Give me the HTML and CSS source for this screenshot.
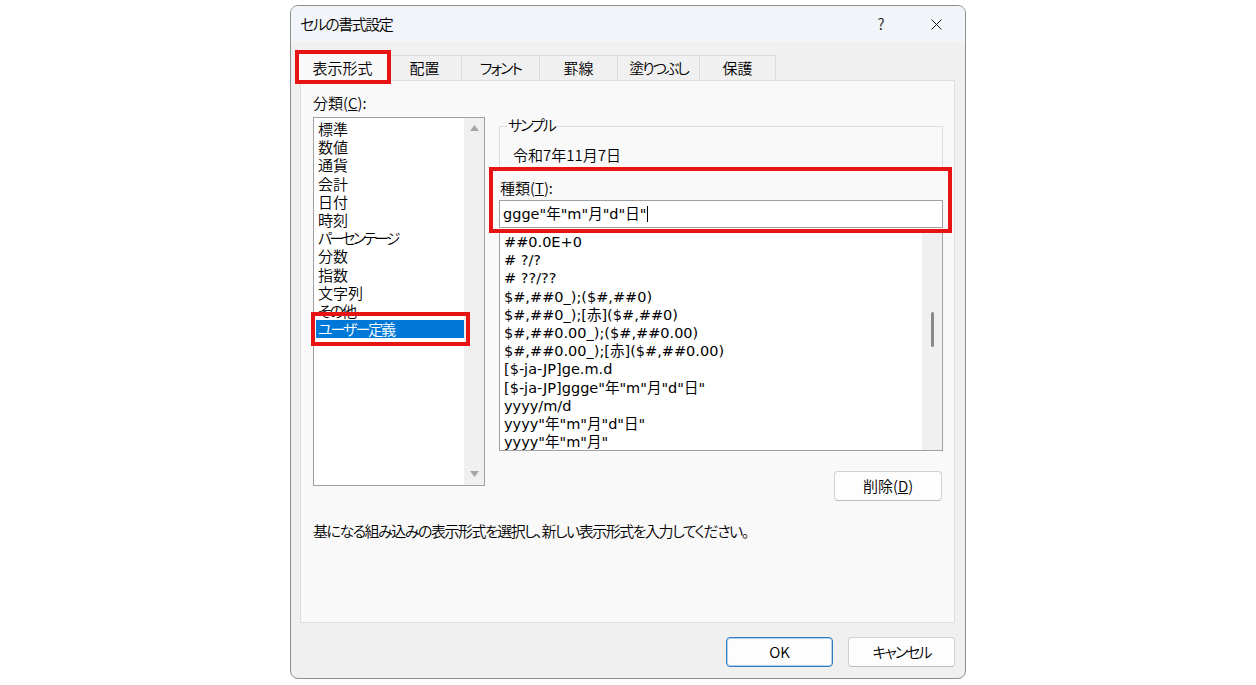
FILE: index.html
```html
<!DOCTYPE html>
<html lang="ja">
<head>
<meta charset="utf-8">
<title>セルの書式設定</title>
<link rel="stylesheet" href="styles.css">
</head>
<body>
<div class="dialog">
  <div class="titlebar">
    <span class="title t1">セルの書式設定</span>
    <div class="caption-buttons">
      <span class="cap-btn help">?</span>
      <span class="cap-btn close"><svg width="11" height="11" viewBox="0 0 11 11"><path d="M0.5 0.5L10.5 10.5M10.5 0.5L0.5 10.5" stroke="#1a1a1a" stroke-width="1" fill="none"/></svg></span>
    </div>
  </div>
  <div class="tabs">
    <div class="tab active">表示形式</div>
    <div class="tab">配置</div>
    <div class="tab t2">フォント</div>
    <div class="tab">罫線</div>
    <div class="tab t2">塗りつぶし</div>
    <div class="tab">保護</div>
  </div>
  <div class="panel">
    <div class="panel-grid">
      <div class="left-col">
        <div class="label">分類(<u>C</u>):</div>
        <div class="listbox cat-list">
          <ul class="items">
            <li>標準</li>
            <li>数値</li>
            <li>通貨</li>
            <li>会計</li>
            <li>日付</li>
            <li>時刻</li>
            <li class="t3">パーセンテージ</li>
            <li>分数</li>
            <li>指数</li>
            <li>文字列</li>
            <li class="t2">その他</li>
            <li class="selected t2">ユーザー定義</li>
          </ul>
          <div class="vscroll arrows">
            <svg width="9" height="6" viewBox="0 0 9 6"><path d="M4.5 0L9 6H0z" fill="#a6a6a6"/></svg>
            <svg width="9" height="6" viewBox="0 0 9 6"><path d="M0 0H9L4.5 6z" fill="#a6a6a6"/></svg>
          </div>
        </div>
      </div>
      <div class="right-col">
        <div class="group">
          <div class="group-label t2">サンプル</div>
          <div class="sample">令和7年11月7日</div>
        </div>
        <div class="label type-label">種類(<u>T</u>):</div>
        <div class="input">ggge"年"m"月"d"日"<span class="caret"></span></div>
        <div class="listbox fmt-list">
          <ul class="items">
            <li>##0.0E+0</li>
            <li># ?/?</li>
            <li># ??/??</li>
            <li>$#,##0_);($#,##0)</li>
            <li>$#,##0_);[赤]($#,##0)</li>
            <li>$#,##0.00_);($#,##0.00)</li>
            <li>$#,##0.00_);[赤]($#,##0.00)</li>
            <li>[$-ja-JP]ge.m.d</li>
            <li>[$-ja-JP]ggge"年"m"月"d"日"</li>
            <li>yyyy/m/d</li>
            <li>yyyy"年"m"月"d"日"</li>
            <li>yyyy"年"m"月"</li>
          </ul>
          <div class="vscroll thin"><span class="thumb"></span></div>
        </div>
        <div class="btn delete">削除(<u>D</u>)</div>
      </div>
    </div>
    <p class="desc t1">基になる組み込みの表示形式を選択し、新しい表示形式を入力してください。</p>
  </div>
  <div class="footer">
    <div class="btn ok">OK</div>
    <div class="btn"><span class="t2">キャンセル</span></div>
  </div>
  <div class="mark mark-tab"></div>
  <div class="mark mark-cat"></div>
  <div class="mark mark-type"></div>
</div>
</body>
</html>
```
FILE: styles.css
```css
* { box-sizing: border-box; }

body {
  margin: 0;
  background: #ffffff;
  font-family: "Noto Sans CJK JP", "Noto Sans", sans-serif;
  font-size: 15px;
  font-weight: 350;
  color: #000;
  font-feature-settings: "palt";
}

.t1 { letter-spacing: -1.5px; }
.t2 { letter-spacing: -2px; }
.t3 { letter-spacing: -2.8px; }

.dialog {
  width: 676px;
  height: 674px;
  margin: 5px auto 0;
  border: 1px solid #8e8e8e;
  border-radius: 8px;
  background: #f0f0f0;
  display: flex;
  flex-direction: column;
  position: relative;
  overflow: hidden;
}

.titlebar {
  flex: none;
  height: 36px;
  display: flex;
  align-items: center;
  padding-left: 9px;
  background: #f1f4f9;
  line-height: 18px;
}

.caption-buttons {
  margin-left: auto;
  display: flex;
  height: 100%;
  padding-right: 6px;
}

.cap-btn {
  width: 46px;
  display: flex;
  align-items: center;
  justify-content: center;
}

.help {
  margin-right: 9px;
  color: #1a1a1a;
  font-size: 15px;
}

.tabs {
  flex: none;
  height: 38px;
  display: grid;
  grid-template-columns: 91px 74px 78px 78px 82px 76px;
  align-items: end;
  padding-left: 6px;
  position: relative;
  z-index: 1;
}

.tab {
  height: 25px;
  margin-left: -1px;
  border: 1px solid #dadada;
  border-bottom: none;
  background: #f0f0f0;
  display: flex;
  align-items: center;
  justify-content: center;
  line-height: 18px;
  white-space: nowrap;
}

.tab.active {
  margin-left: 0;
  height: 28px;
  margin-bottom: -1px;
  background: #f9f9f9;
  border-color: #d2d2d2;
}

.panel {
  flex: none;
  height: 543px;
  margin: 0 10px 0 9px;
  background: #f9f9f9;
  border: 1px solid #dedede;
  padding: 13px 11px 0 12px;
}

.panel-grid {
  display: grid;
  grid-template-columns: 172px 444px;
  column-gap: 14px;
  align-items: start;
}

.label {
  height: 18px;
  line-height: 18px;
}

.listbox {
  border: 1px solid #a0a0a0;
  background: #ffffff;
  display: flex;
  overflow: hidden;
}

.items {
  flex: 1;
  min-width: 0;
  list-style: none;
  margin: 0;
  padding: 2px 0 0 2px;
  overflow: hidden;
}

.items li {
  height: 18.2px;
  line-height: 18.2px;
  padding-left: 2px;
  white-space: nowrap;
}

.items li.selected {
  background: #0078d7;
  color: #ffffff;
}

.cat-list {
  margin-top: 5px;
  height: 369px;
}

.vscroll {
  flex: none;
  width: 20px;
  background: #f0f0f0;
}

.vscroll.arrows {
  display: flex;
  flex-direction: column;
  justify-content: space-between;
  align-items: center;
  padding: 7px 0 8px;
}

.vscroll.arrows svg { display: block; }

.vscroll.thin {
  padding-top: 81px;
}

.thumb {
  display: block;
  width: 3px;
  height: 35px;
  margin: 0 auto;
  border-radius: 2px;
  background: #8a8a8a;
}

.right-col {
  margin-top: 32px;
  display: flex;
  flex-direction: column;
}

.group {
  height: 45px;
  border: 1px solid #dcdcdc;
  padding-left: 13px;
}

.group-label {
  width: max-content;
  margin: -11px 0 0 -6px;
  padding: 0 1px;
  background: #f9f9f9;
  line-height: 18px;
}

.sample {
  margin-top: 12px;
  line-height: 18px;
}

.type-label {
  margin-top: 8px;
  padding-left: 1px;
}

.input {
  margin-top: 3px;
  height: 28px;
  border: 1px solid #a0a0a0;
  background: #ffffff;
  padding: 0 3px;
  display: flex;
  align-items: center;
  line-height: 18px;
  white-space: nowrap;
}

.input,
.fmt-list .items {
  font-family: "DejaVu Sans", "Noto Sans CJK JP", sans-serif;
  font-size: 14.5px;
  font-weight: 400;
}

.caret {
  display: inline-block;
  width: 1px;
  height: 16px;
  margin-left: 1px;
  background: #000;
}

.fmt-list {
  margin-top: 2px;
  height: 221px;
}

.btn {
  height: 30px;
  border: 1px solid #d0d0d0;
  border-bottom-color: #bdbdbd;
  border-radius: 4px;
  background: #fdfdfd;
  display: flex;
  align-items: center;
  justify-content: center;
  line-height: 18px;
  width: 107px;
}

.btn.delete {
  margin-top: 20px;
  margin-right: 1px;
  align-self: flex-end;
  width: 108px;
}

.btn.ok {
  border-color: #2f7cc4;
  box-shadow: inset 0 0 0 1px rgba(47, 124, 196, 0.35);
}

.desc {
  margin: 21px 0 0;
  line-height: 18px;
}

.footer {
  flex: 1;
  display: flex;
  justify-content: flex-end;
  align-items: flex-start;
  gap: 15px;
  padding: 14px 10px 0 0;
}

.mark {
  position: absolute;
  border: 4px solid #e81313;
  pointer-events: none;
  z-index: 5;
}

.mark-tab {
  left: 4px;
  top: 44px;
  width: 96px;
  height: 34px;
}

.mark-cat {
  left: 20px;
  top: 306px;
  width: 159px;
  height: 34px;
}

.mark-type {
  left: 198px;
  top: 161px;
  width: 463px;
  height: 66px;
}
```
